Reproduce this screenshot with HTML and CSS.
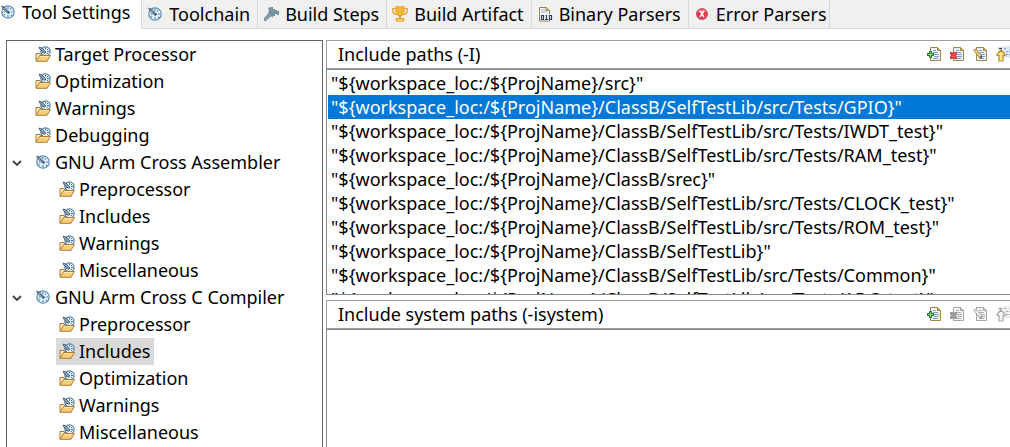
FILE: index.html
```html
<!DOCTYPE html>
<html lang="en">
<head>
<meta charset="utf-8">
<title>Tool Settings</title>
<link rel="stylesheet" href="styles.css">
</head>
<body>
<svg class="defs" aria-hidden="true">
  <symbol id="gauge" viewBox="0 0 16 16">
    <circle cx="8" cy="8" r="6.200" fill="#e6f2fa" stroke="#5d8fb3" stroke-width="1.300"/>
    <path d="M8 3v2M8 11v2M11 8h2M3.500 8h2M11 4.500l-1 1M11 11l1 1M4 11l1-1" stroke="#4f87ad" stroke-width="1.200"/>
    <path d="M1.500 2l3 1L9 7.500 7.500 9 3 5z" fill="#a9bac5" stroke="#3f5668" stroke-width=".7"/>
    <path d="M3 3l6 6" stroke="#2f4658" stroke-dasharray="1.500 .7"/>
    <circle cx="8.500" cy="8.500" r="1.200" fill="#24588a"/>
  </symbol>
  <symbol id="folder" viewBox="0 0 16 16">
    <path d="M1 15V7.500h4l1 1.500h7" fill="#fff0c4" stroke="#b5772d"/>
    <circle cx="10.500" cy="5.500" r="4.600" fill="#e6f2fa" stroke="#4b7da3" stroke-width="1.200"/>
    <path d="M4 1l3 1 4 4-1.500 1.500L5 3.500z" fill="#8fa3b0" stroke="#2f4354" stroke-width=".7"/>
    <path d="M10.500 2v1.500M14 5.500h-2M13 3l-1 1M12 7l1 1M7 6.500h1.500" stroke="#3f7198"/>
    <path d="M1 15.300l3.500-5.800H15.400L12 15.300z" fill="#f8cd78" stroke="#b5772d"/>
    <path d="M5 10.500h9" stroke="#ffe8b0"/>
  </symbol>
  <symbol id="hammer" viewBox="0 0 16 16">
    <path d="M5 2l3-1h2v2h2v1h2v1h2v4h-2V8h-2v2h-2v2L8 10 5 7l1-2z" fill="#7690a3"/>
    <path d="M6 6.500l3 3L3 15H1v-3z" fill="#7c95a7"/>
    <path d="M8 3l5 3.500M2 13l6-5" stroke="#a9bac6" stroke-dasharray="1 1"/>
  </symbol>
  <symbol id="trophy" viewBox="0 0 16 16">
    <path d="M4 2.500H.8v3.500L3 8.500h2M12 2.500h3.200v3.500L13 8.500h-2" fill="none" stroke="#e69b24" stroke-width="1.200"/>
    <path d="M4 .8h8V7l-2 2.500H6L4 7z" fill="#fbc544" stroke="#e69b24"/>
    <path d="M6.500 2v6M9.500 2v6" stroke="#e69b24"/>
    <path d="M8 9v3" stroke="#e69b24" stroke-width="2"/>
    <path d="M4 12.500h8v2.500H4z" fill="#ffd56a" stroke="#e69b24"/>
  </symbol>
  <symbol id="binary" viewBox="0 0 16 16">
    <path d="M2.500 15V1.500h7l3 3V15z" fill="#f6f8fb" stroke="#968449"/>
    <path d="M9 1.500v3h3.500" fill="#e5c878" stroke="#968449"/>
    <path d="M4 4h4M4 6h6" stroke="#9fb3ce"/>
    <path d="M3 8h12v6H3z" fill="#f6f8fb"/>
    <path d="M4.500 9.500h2v4h-2zM12.500 9.500h2v4h-2zM8.500 9.500h1v4M8 13.500h3" fill="none" stroke="#273f6f" stroke-width="1.200"/>
  </symbol>
  <symbol id="error" viewBox="0 0 16 16">
    <circle cx="8" cy="8" r="5.500" fill="#e2384a" stroke="#cf5261"/>
    <path d="M3.500 6a5 5 0 0 1 9 0" fill="#f07c85"/>
    <path d="M6 5l4 6M10 5l-4 6" stroke="#fff" stroke-width="1.500"/>
  </symbol>
  <symbol id="page" viewBox="0 0 16 16">
    <path d="M3.500 1.500h7l3 3v10h-10z" fill="var(--paper)" stroke="var(--edge)"/>
    <path d="M10.500 1.500v3h3z" fill="var(--fold)" stroke="var(--edge)"/>
    <path d="M6 4.500h3M6 6.500h5M7 8.500h5M7 10.500h5M6 12.500h5" stroke="var(--line)"/>
  </symbol>
  <symbol id="add" viewBox="0 0 16 16">
    <use href="#page"/>
    <path d="M2.500 5.500h2v2h2v2h-2v2h-2v-2h-2v-2h2z" fill="#8fd35c" stroke="#146c35"/>
  </symbol>
  <symbol id="delete" viewBox="0 0 16 16">
    <use href="#page"/>
    <path d="M0 6h2.500l1 1.500 1-1.500H7v2L6 9.500l1 1.500v2H4.500l-1-1.500-1 1.500H0v-2l1-1.500-1-1.500z" fill="var(--cross)"/>
    <path d="M1.500 7l4 5M5.500 7l-4 5" stroke="var(--shine)" stroke-dasharray="1 1"/>
  </symbol>
  <symbol id="edit" viewBox="0 0 16 16">
    <use href="#page"/>
    <path d="M.8 4l2-1 5.500 6 .5 3-3-1z" fill="var(--pencil)" stroke="var(--edge)"/>
    <path d="M6.500 11l2.500 1V9.500" fill="var(--tip)"/>
  </symbol>
  <symbol id="up" viewBox="0 0 16 16">
    <path d="M2.500 1v13M7 .5h9v11H7z" fill="var(--shade)" stroke="var(--shade)"/>
    <path d="M3 2.500h3" stroke="var(--tip)" stroke-width="1.500"/>
    <path d="M8 2.500h3M10 5.500h5M10 8.500h5" stroke="var(--line)" stroke-dasharray="2 1"/>
    <path d="M5 4l4 4.500v1H7v5.500H3V9.500H1v-1z" fill="var(--arrow)" stroke="var(--arrow-edge)" stroke-width="1.200"/>
  </symbol>
  <symbol id="chevron" viewBox="0 0 10 8">
    <path d="M1 2l4 4 4-4" fill="none" stroke="#404040" stroke-width="1.800"/>
  </symbol>
</svg>

<nav class="tabs" role="tablist">
  <button class="tab tab-active" role="tab" aria-selected="true"><svg class="icon"><use href="#gauge"/></svg>Tool Settings</button>
  <button class="tab" role="tab"><svg class="icon"><use href="#gauge"/></svg>Toolchain</button>
  <button class="tab" role="tab"><svg class="icon"><use href="#hammer"/></svg>Build Steps</button>
  <button class="tab" role="tab"><svg class="icon"><use href="#trophy"/></svg>Build Artifact</button>
  <button class="tab" role="tab"><svg class="icon"><use href="#binary"/></svg>Binary Parsers</button>
  <button class="tab tab-last" role="tab"><svg class="icon"><use href="#error"/></svg>Error Parsers</button>
</nav>

<main class="content">
  <ul class="tree" role="tree">
    <li class="node" role="treeitem"><span class="label"><svg class="icon"><use href="#folder"/></svg>Target Processor</span></li>
    <li class="node" role="treeitem"><span class="label"><svg class="icon"><use href="#folder"/></svg>Optimization</span></li>
    <li class="node" role="treeitem"><span class="label"><svg class="icon"><use href="#folder"/></svg>Warnings</span></li>
    <li class="node" role="treeitem"><span class="label"><svg class="icon"><use href="#folder"/></svg>Debugging</span></li>
    <li class="node node-open" role="treeitem" aria-expanded="true">
      <button class="expander" aria-label="Collapse"><svg class="chevron"><use href="#chevron"/></svg></button><span class="label"><svg class="icon"><use href="#gauge"/></svg>GNU Arm Cross Assembler</span>
    </li>
    <li role="none">
      <ul class="branch" role="group">
        <li class="node" role="treeitem"><span class="label"><svg class="icon"><use href="#folder"/></svg>Preprocessor</span></li>
        <li class="node" role="treeitem"><span class="label"><svg class="icon"><use href="#folder"/></svg>Includes</span></li>
        <li class="node" role="treeitem"><span class="label"><svg class="icon"><use href="#folder"/></svg>Warnings</span></li>
        <li class="node" role="treeitem"><span class="label"><svg class="icon"><use href="#folder"/></svg>Miscellaneous</span></li>
      </ul>
    </li>
    <li class="node node-open" role="treeitem" aria-expanded="true">
      <button class="expander" aria-label="Collapse"><svg class="chevron"><use href="#chevron"/></svg></button><span class="label"><svg class="icon"><use href="#gauge"/></svg>GNU Arm Cross C Compiler</span>
    </li>
    <li role="none">
      <ul class="branch" role="group">
        <li class="node" role="treeitem"><span class="label"><svg class="icon"><use href="#folder"/></svg>Preprocessor</span></li>
        <li class="node" role="treeitem" aria-selected="true"><span class="label label-selected"><svg class="icon"><use href="#folder"/></svg>Includes</span></li>
        <li class="node" role="treeitem"><span class="label"><svg class="icon"><use href="#folder"/></svg>Optimization</span></li>
        <li class="node" role="treeitem"><span class="label"><svg class="icon"><use href="#folder"/></svg>Warnings</span></li>
        <li class="node" role="treeitem"><span class="label"><svg class="icon"><use href="#folder"/></svg>Miscellaneous</span></li>
      </ul>
    </li>
  </ul>

  <div class="panels">
    <section class="panel">
      <header class="panel-head">
        <h2 class="panel-title" id="paths">Include paths (-I)</h2>
        <div class="tools">
          <button class="tool" aria-label="Add"><svg class="icon"><use href="#add"/></svg></button>
          <button class="tool" aria-label="Delete"><svg class="icon"><use href="#delete"/></svg></button>
          <button class="tool" aria-label="Edit"><svg class="icon"><use href="#edit"/></svg></button>
          <button class="tool" aria-label="Move up"><svg class="icon"><use href="#up"/></svg></button>
        </div>
      </header>
      <ul class="list list-paths" role="listbox" aria-labelledby="paths">
        <li class="path" role="option">"${workspace_loc:/${ProjName}/src}"</li>
        <li class="path path-selected" role="option" aria-selected="true">"${workspace_loc:/${ProjName}/ClassB/SelfTestLib/src/Tests/GPIO}"</li>
        <li class="path" role="option">"${workspace_loc:/${ProjName}/ClassB/SelfTestLib/src/Tests/IWDT_test}"</li>
        <li class="path" role="option">"${workspace_loc:/${ProjName}/ClassB/SelfTestLib/src/Tests/RAM_test}"</li>
        <li class="path" role="option">"${workspace_loc:/${ProjName}/ClassB/srec}"</li>
        <li class="path" role="option">"${workspace_loc:/${ProjName}/ClassB/SelfTestLib/src/Tests/CLOCK_test}"</li>
        <li class="path" role="option">"${workspace_loc:/${ProjName}/ClassB/SelfTestLib/src/Tests/ROM_test}"</li>
        <li class="path" role="option">"${workspace_loc:/${ProjName}/ClassB/SelfTestLib}"</li>
        <li class="path" role="option">"${workspace_loc:/${ProjName}/ClassB/SelfTestLib/src/Tests/Common}"</li>
        <li class="path" role="option">"${workspace_loc:/${ProjName}/ClassB/SelfTestLib/src/Tests/ADC_test}"</li>
      </ul>
    </section>
    <section class="panel panel-fill">
      <header class="panel-head">
        <h2 class="panel-title" id="system">Include system paths (-isystem)</h2>
        <div class="tools">
          <button class="tool" aria-label="Add"><svg class="icon"><use href="#add"/></svg></button>
          <button class="tool" aria-label="Delete" disabled><svg class="icon"><use href="#delete"/></svg></button>
          <button class="tool" aria-label="Edit" disabled><svg class="icon"><use href="#edit"/></svg></button>
          <button class="tool" aria-label="Move up" disabled><svg class="icon"><use href="#up"/></svg></button>
        </div>
      </header>
      <ul class="list list-fill" role="listbox" aria-labelledby="system"></ul>
    </section>
  </div>
</main>
</body>
</html>
```
FILE: styles.css
```css
* { box-sizing: border-box; }

body {
  margin: 0;
  height: 100vh;
  display: flex;
  flex-direction: column;
  overflow: hidden;
  background: #fff;
  color: #000;
  font: 18px/24px "Noto Sans", "Open Sans", sans-serif;
}

ul { list-style: none; margin: 0; padding: 0; }
button { font: inherit; color: inherit; border: 0; padding: 0; background: none; }
.defs { position: absolute; width: 0; height: 0; }
.icon { width: 16px; height: 16px; flex: none; display: block; }

.tabs {
  display: flex;
  flex: none;
  height: 29px;
  background: #f0f0f0;
  border-bottom: 1px solid #d9d9d9;
}
.tab {
  display: flex;
  align-items: center;
  gap: 6px;
  padding: 0 7px 0 5px;
  border-right: 1px solid #d9d9d9;
  white-space: nowrap;
}
.tab-active {
  height: 29px;
  padding: 0 11px 5px 0;
  background: #fff;
}
.tab-last { padding-right: 2px; }

.content {
  flex: 1;
  min-height: 0;
  display: flex;
  gap: 3px;
  padding: 11px 0 0 6px;
}

.tree {
  flex: 0 0 317px;
  overflow: hidden;
  border: 1px solid #646464;
  border-bottom: 0;
}
.node { display: flex; height: 27px; padding-left: 25px; }
.branch .node { padding-left: 49px; }
.node-open { padding-left: 5px; }
.expander { width: 20px; display: flex; align-items: center; }
.chevron { width: 10px; height: 8px; }
.label {
  display: flex;
  align-items: center;
  gap: 4px;
  padding: 0 4px 2px 3px;
  white-space: nowrap;
}
.label-selected { background: #d9d9d9; }

.panels {
  flex: 1;
  min-width: 0;
  display: flex;
  flex-direction: column;
  gap: 5px;
}
.panel { display: flex; flex-direction: column; }
.panel-fill { flex: 1; }
.panel-head {
  display: flex;
  justify-content: space-between;
  align-items: center;
  height: 29px;
  padding-bottom: 2px;
  border: 1px solid #a0a0a0;
  border-right: 0;
}
.panel-title { margin: 0; padding-left: 11px; font-size: inherit; font-weight: 400; }
.tools { display: flex; gap: 7px; width: 83px; overflow: hidden; }

.tool {
  --paper: #eff5fc;
  --edge: #a18743;
  --fold: #e8bd62;
  --line: #819dca;
  --cross: #d9303f;
  --shine: #f48b90;
  --pencil: #ecc989;
  --tip: #24456f;
  --shade: #dde7f2;
  --arrow: #ffe68c;
  --arrow-edge: #bd8727;
}
.tool:disabled {
  --paper: #f5f5f5;
  --edge: #a5a5a5;
  --fold: #ddd;
  --line: #ababab;
  --cross: #999;
  --shine: #aaa;
  --pencil: #eee;
  --tip: #999;
  --shade: #ececec;
  --arrow: #fafafa;
  --arrow-edge: #a5a5a5;
}

.list {
  overflow: hidden;
  border: 1px solid #828790;
  border-right: 0;
  padding: 1px 0 1px 1px;
}
.list-paths { height: 226px; }
.list-fill { flex: 1; border-bottom: 0; }
.path { height: 24px; padding-left: 3px; white-space: nowrap; }
.path-selected { background: #0078d7; color: #fff; }
```
